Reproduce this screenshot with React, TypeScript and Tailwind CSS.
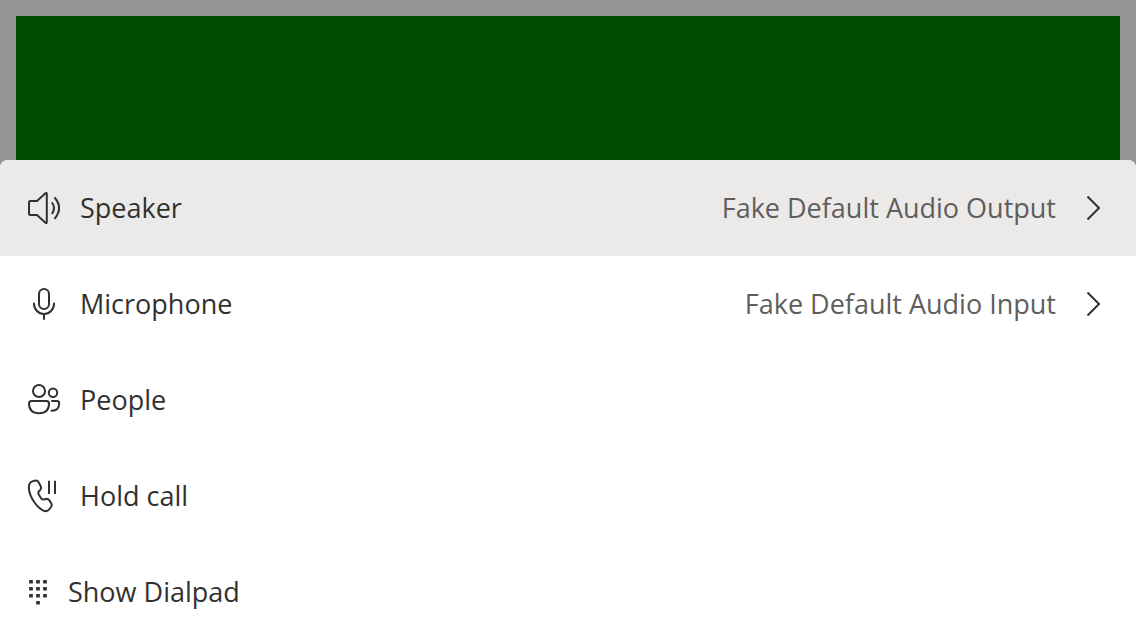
import type { ReactNode } from "react";

type RowProps = { label: string; icon: ReactNode; value?: string; active?: boolean; small?: boolean };

function Row({ label, icon, value, active, small }: RowProps) {
  return (
    <li>
      <button type="button" className={`flex h-24 w-full items-center px-6 text-left text-[#323130] ${active ? "bg-[#ebeae9]" : "bg-white"}`}>
        <span className={`shrink-0 ${small ? "w-7" : "w-10"}`}>{icon}</span>
        <span className="ml-4 flex-1 text-[27px] leading-10">{label}</span>
        {value && (
          <>
            <span className="text-[27px] leading-10 text-[#605e5c]">{value}</span>
            <svg viewBox="0 0 40 40" className="ml-4 size-10" fill="none" stroke="currentColor" strokeWidth="2" aria-hidden="true">
              <path d="M15.5 8.5 27 20 15.5 31.5" />
            </svg>
          </>
        )}
      </button>
    </li>
  );
}

function Icon({ children }: { children: ReactNode }) {
  return (
    <svg viewBox="0 0 40 40" className="size-10 max-w-none" fill="none" stroke="currentColor" strokeWidth="2" strokeLinecap="round" strokeLinejoin="round" aria-hidden="true">
      {children}
    </svg>
  );
}

function SpeakerIcon() {
  return (
    <Icon>
      <path d="M6.5 13H13L21.2 5.4Q22.8 4.4 22.8 6V34Q22.8 35.6 21.2 34.6L13 27H6.5Q5 27 5 25.5V14.5Q5 13 6.500 13Z" />
      <path d="M28.3 15Q31.700 20 28.3 25.3M31 10Q39.2 20 31 30.3" />
    </Icon>
  );
}

function MicrophoneIcon() {
  return (
    <Icon>
      <rect x="15" y="5" width="10" height="20" rx="5" />
      <path d="M10 19.5V20a10 10 0 0 0 20 0v-.5M20 30v5" />
    </Icon>
  );
}

function PeopleIcon() {
  return (
    <Icon>
      <circle cx="15" cy="11" r="6" />
      <circle cx="29" cy="12.7" r="4.2" />
      <path d="M7.5 21h15q2.5 0 2.5 2.5c0 6.5-3.5 9.7-10 9.7S5 30 5 23.5Q5 21 7.5 21Z" />
      <path d="M28 21h4.8q2.4 0 2.4 2.4c0 5-2.7 7.4-7.7 7.3" />
    </Icon>
  );
}

function HoldCallIcon() {
  return (
    <Icon>
      <path d="M8.3 5.4 10.5 4.7C12.7 4.2 14.2 5 15 7L16.7 10.2Q17.7 12.3 16 14.2L14.7 15.5C14 16.5 14.2 17.4 14.9 18.7L17 22.1C18 23.5 18.8 23.8 20 23.5L21.9 23C23.4 22.6 24.5 23.2 25.4 24.4L27.2 27.2Q28.4 29.1 27 31L25.5 33C23.9 35.2 21.7 35.6 19.4 34.6C12.5 31.2 5.6 21 4.9 12.7C4.6 9 5.4 6.3 8.3 5.4Z" />
      <path d="M25 4.7V18M31 4.7V18" strokeLinecap="butt" />
    </Icon>
  );
}

const dialpadKeys = [
  [7, 9.8], [14, 9.8], [21, 9.8],
  [7, 16.8], [14, 16.8], [21, 16.8],
  [7, 23.8], [14, 23.8], [21, 23.8],
  [14, 30.8],
];

function DialpadIcon() {
  return (
    <Icon>
      {dialpadKeys.map(([x, y]) => (
        <rect key={`${x}-${y}`} x={x - 1.9} y={y - 1.8} width="3.8" height="3.6" rx="0.6" stroke="none" fill="currentColor" />
      ))}
    </Icon>
  );
}

export default function App() {
  return (
    <div className="flex min-h-screen flex-col bg-[#969696] font-['Open_Sans',sans-serif]">
      <div className="px-4 pt-4">
        <div className="h-36 bg-[#004c00]" />
      </div>
      <ul className="flex-1 overflow-hidden rounded-t-lg bg-white">
        <Row label="Speaker" value="Fake Default Audio Output" active icon={<SpeakerIcon />} />
        <Row label="Microphone" value="Fake Default Audio Input" icon={<MicrophoneIcon />} />
        <Row label="People" icon={<PeopleIcon />} />
        <Row label="Hold call" icon={<HoldCallIcon />} />
        <Row label="Show Dialpad" small icon={<DialpadIcon />} />
      </ul>
    </div>
  );
}
